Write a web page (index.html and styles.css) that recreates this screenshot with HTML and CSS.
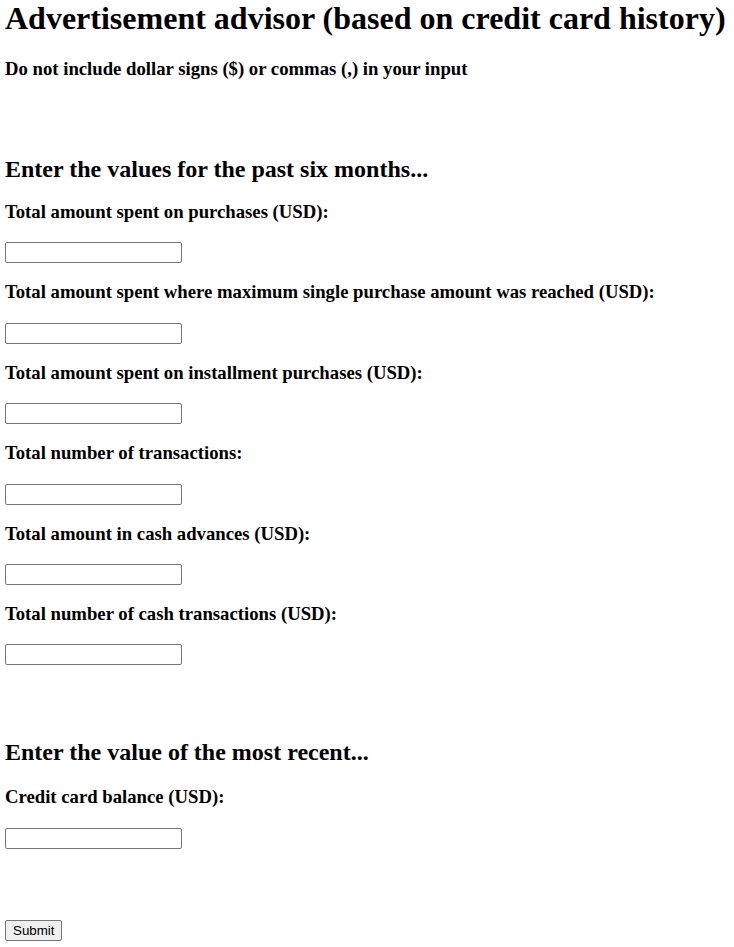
FILE: index.html
```html
<!DOCTYPE html>
<html>
<head>
<meta charset="utf-8">
<link rel="stylesheet" href="styles.css">
</head>
<body>
<h1 class="title">Advertisement advisor (based on credit card history)</h1>
<h3 class="note">Do not include dollar signs ($) or commas (,) in your input</h3>
<form class="form">
  <h2 class="section section-first">Enter the values for the past six months...</h2>
  <div class="field">
    <label class="label">Total amount spent on purchases (USD):</label>
    <input class="input" type="text">
  </div>
  <div class="field">
    <label class="label">Total amount spent where maximum single purchase amount was reached (USD):</label>
    <input class="input" type="text">
  </div>
  <div class="field">
    <label class="label">Total amount spent on installment purchases (USD):</label>
    <input class="input" type="text">
  </div>
  <div class="field">
    <label class="label">Total number of transactions:</label>
    <input class="input" type="text">
  </div>
  <div class="field">
    <label class="label">Total amount in cash advances (USD):</label>
    <input class="input" type="text">
  </div>
  <div class="field">
    <label class="label">Total number of cash transactions (USD):</label>
    <input class="input" type="text">
  </div>
  <h2 class="section section-second">Enter the value of the most recent...</h2>
  <div class="field">
    <label class="label">Credit card balance (USD):</label>
    <input class="input" type="text">
  </div>
  <div class="actions">
    <button class="submit" type="submit">Submit</button>
  </div>
</form>
</body>
</html>
```
FILE: styles.css
```css
html, body {
  margin: 0;
  padding: 0;
  background: #ffffff;
  color: #000000;
}
body {
  padding: 0 5px;
  font-family: "Liberation Serif", "Times New Roman", serif;
}
.title {
  font-size: 32px;
  font-weight: bold;
  line-height: 37px;
  margin: 0;
}
.note {
  font-size: 18.72px;
  font-weight: bold;
  line-height: 22px;
  margin: 21px 0 0;
}
.form {
  display: flex;
  flex-direction: column;
  align-items: flex-start;
}
.section {
  font-size: 24px;
  font-weight: bold;
  line-height: 28px;
  margin: 0;
}
.section-first {
  margin-top: 75px;
}
.section-second {
  margin-top: 73px;
  margin-bottom: 2px;
}
.field {
  display: flex;
  flex-direction: column;
  align-items: flex-start;
}
.label {
  display: block;
  font-size: 18.72px;
  font-weight: bold;
  line-height: 21.4px;
  margin: 18px 0 20px;
}
.input {
  width: 177px;
  height: 21px;
  box-sizing: border-box;
  border: 1px solid #767676;
  border-radius: 2px;
  padding: 1px 2px;
  margin: 0;
  font-family: "Liberation Sans", Arial, sans-serif;
  font-size: 13.333px;
  background: #fff;
}
.actions {
  margin-top: 71px;
}
.submit {
  font-family: "Liberation Sans", Arial, sans-serif;
  font-size: 13.333px;
  height: 21px;
  padding: 1px 7px;
  border: 1px solid #767676;
  border-radius: 2px;
  background: #efefef;
  color: #000;
  margin: 0;
}
```
